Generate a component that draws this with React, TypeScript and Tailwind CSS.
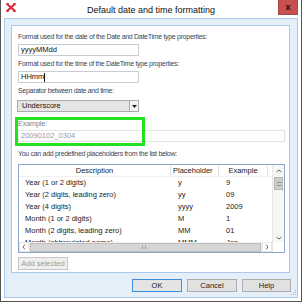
import React from "react";

const rows: [string, string, string][] = [
  ["Year (1 or 2 digits)", "y", "9"],
  ["Year (2 digits, leading zero)", "yy", "09"],
  ["Year (4 digits)", "yyyy", "2009"],
  ["Month (1 or 2 digits)", "M", "1"],
  ["Month (2 digits, leading zero)", "MM", "01"],
  ["Month (abbreviated name)", "MMM", "Jan"],
];

const label = "h-[11px] whitespace-nowrap text-[7px] tracking-[-0.3px]";

export default function App() {
  return (
    <div
      className="relative w-[302px] h-[302px] bg-white border border-t-0 border-[#555555] overflow-hidden text-[7.5px] leading-[11px] text-[#3b4656]"
      style={{ fontFamily: '"Liberation Sans", Arial, sans-serif' }}
    >
      {/* Title bar */}
      <div className="grid grid-cols-[1fr_auto_1fr] h-[18px] items-start">
        <div className="pl-[5px] pt-[3px]">
          <svg width="10" height="9" viewBox="0 0 10 9">
            <path d="M1 1 L9 8 M9 1 L1 8" stroke="#d8262e" strokeWidth="2" />
            <path d="M0 0.8 H3 M7 0.8 H10 M0 8.2 H3 M7 8.2 H10" stroke="#d8262e" strokeWidth="1.2" />
          </svg>
        </div>
        <div className="text-[9px] leading-[14px] pt-[3px] text-[#111]">Default date and time formatting</div>
        <div className="flex justify-end pr-[3px]">
          <div className="w-[20px] h-[15px] bg-[#c75050] border border-[#a84444] border-t-0 flex items-center justify-center text-[9px] font-bold text-[#111] leading-none">
            x
          </div>
        </div>
      </div>

      {/* Frame */}
      <div className="mx-[3px] h-[280px] border border-[#a9c9e8] bg-[#e5eff9] flex flex-col">
        {/* Panel */}
        <div className="mt-[6px] ml-[6px] mr-[7px] h-[248px] border border-[#a9c9e8] bg-white pl-[6px] pr-[4px] pt-[5px] flex flex-col relative">
          <div className={label}>Format used for the date of the Date and DateTime type properties:</div>
          <div className="mt-[2px] w-[121px] h-[12px] border border-[#c9ccd2] px-[2px] leading-[10px] text-[#111]">yyyyMMdd</div>
          <div className={"mt-[2px] " + label}>Format used for the time of the DateTime type properties:</div>
          <div className="mt-[2px] w-[121px] h-[12px] border border-[#c9ccd2] px-[2px] leading-[10px] text-[#111] flex items-center">
            HHmm<span className="w-px h-[9px] bg-[#111]" />
          </div>
          <div className={"mt-[2px] " + label}>Separator between date and time:</div>
          <div className="mt-[4px] -ml-px w-[122px] h-[12px] border border-[#acacac] bg-[#e5e5e5] flex">
            <div className="flex-1 pl-[4px] leading-[10px] text-[#111]">Underscore</div>
            <div className="w-[9px] border-l border-[#acacac] bg-[#f4f4f4] flex items-center justify-center">
              <svg width="5" height="3" viewBox="0 0 5 3">
                <path d="M0 0 H5 L2.5 3 Z" fill="#222" />
              </svg>
            </div>
          </div>
          <div className="mt-[6px] h-[11px] text-[#6b84a3] text-[7px]">Example:</div>
          <div className="mt-[1px] h-[12px] border border-[#e3e3e3] px-[2px] leading-[10px] text-[#9a9a9a]">20090102_0304</div>
          <div className={"mt-[6px] " + label}>You can add predefined placeholders from the list below:</div>

          {/* Table */}
          <div className="mt-[5px] h-[89px] border border-[#88a6cb] flex text-[#222]">
            <div className="w-[253px] flex flex-col">
              <div className="h-[12px] flex border-b border-[#f0f0f0] leading-[11px]">
                <div className="w-[152px] border-r border-[#e2e2e2] text-center">Description</div>
                <div className="w-[48px] border-r border-[#e2e2e2] pl-[2px]">Placeholder</div>
                <div className="w-[49px] border-r border-[#e2e2e2] text-center">Example</div>
                <div className="flex-1" />
              </div>
              <div className="h-[65px] overflow-hidden">
                {rows.map((r) => (
                  <div key={r[0]} className="h-[12px] flex leading-[12px]">
                    <div className="w-[152px] pl-[6px] whitespace-nowrap">{r[0]}</div>
                    <div className="w-[48px] pl-[7px]">{r[1]}</div>
                    <div className="w-[49px] pl-[7px]">{r[2]}</div>
                  </div>
                ))}
              </div>
              {/* Horizontal scrollbar */}
              <div className="h-[10px] bg-[#f0f0f0] flex items-center">
                <div className="w-[10px] h-full flex items-center justify-center bg-white border border-[#e6e6e6]">
                  <svg width="4" height="6" viewBox="0 0 4 6">
                    <path d="M3 0.5 L1 3 L3 5.5" stroke="#555" strokeWidth="0.9" fill="none" />
                  </svg>
                </div>
                <div className="flex-1 h-[9px] mx-px bg-[#d6d6d6] border border-[#bdbdbd] flex items-center justify-end pr-[114px]">
                  <div className="w-[4px] h-[3px] border-x border-[#999]" />
                </div>
                <div className="w-[10px] h-full flex items-center justify-center bg-white border border-[#e6e6e6]">
                  <svg width="4" height="6" viewBox="0 0 4 6">
                    <path d="M1 0.5 L3 3 L1 5.5" stroke="#555" strokeWidth="0.9" fill="none" />
                  </svg>
                </div>
              </div>
            </div>
            {/* Vertical scrollbar */}
            <div className="w-[12px] flex flex-col border-l border-[#e6e6e6]">
              <div className="flex-1 flex flex-col bg-[#f7f7f7]">
                <div className="h-[12px] flex items-center justify-center">
                  <svg width="6" height="4" viewBox="0 0 6 4">
                    <path d="M0.5 3 L3 1 L5.5 3" stroke="#555" strokeWidth="0.9" fill="none" />
                  </svg>
                </div>
                <div className="mx-px h-[13px] bg-[#cdcdcd] border border-[#b5b5b5] flex items-center justify-center">
                  <div className="w-[4px] h-[4px] border-y border-[#8c8c8c]" />
                </div>
                <div className="flex-1" />
                <div className="h-[9px] flex items-center justify-center">
                  <svg width="6" height="4" viewBox="0 0 6 4">
                    <path d="M0.5 1 L3 3 L5.5 1" stroke="#555" strokeWidth="0.9" fill="none" />
                  </svg>
                </div>
              </div>
              <div className="h-[10px] bg-white" />
            </div>
          </div>

          <div className="mt-[4px] w-[50px] h-[13px] border border-[#c6c6c6] bg-[#efefef] text-[#9b9b9b] text-center leading-[11px]">
            Add selected
          </div>

          {/* annotation highlight */}
          <div className="absolute left-[3px] top-[91px] w-[130px] h-[29px] border-[3px] border-[#22e022]" />
        </div>

        {/* Buttons */}
        <div className="mt-[6px] pr-[6px] flex justify-end gap-[5px] text-[#222]">
          <div className="w-[50px] h-[13px] border border-[#3c8fd6] bg-[#e4e4e4] text-center leading-[11px]">OK</div>
          <div className="w-[50px] h-[13px] border border-[#adadad] bg-[#e1e1e1] text-center leading-[11px]">Cancel</div>
          <div className="w-[49px] h-[13px] border border-[#adadad] bg-[#e1e1e1] text-center leading-[11px]">Help</div>
        </div>
      </div>

      {/* resize grip */}
      <svg className="absolute right-[4px] bottom-[5px]" width="7" height="7" viewBox="0 0 7 7">
        <rect x="5" y="1" width="1" height="1" fill="#b8b8b8" />
        <rect x="3" y="3" width="1" height="1" fill="#b8b8b8" />
        <rect x="5" y="3" width="1" height="1" fill="#b8b8b8" />
        <rect x="1" y="5" width="1" height="1" fill="#b8b8b8" />
        <rect x="3" y="5" width="1" height="1" fill="#b8b8b8" />
        <rect x="5" y="5" width="1" height="1" fill="#b8b8b8" />
      </svg>
    </div>
  );
}
